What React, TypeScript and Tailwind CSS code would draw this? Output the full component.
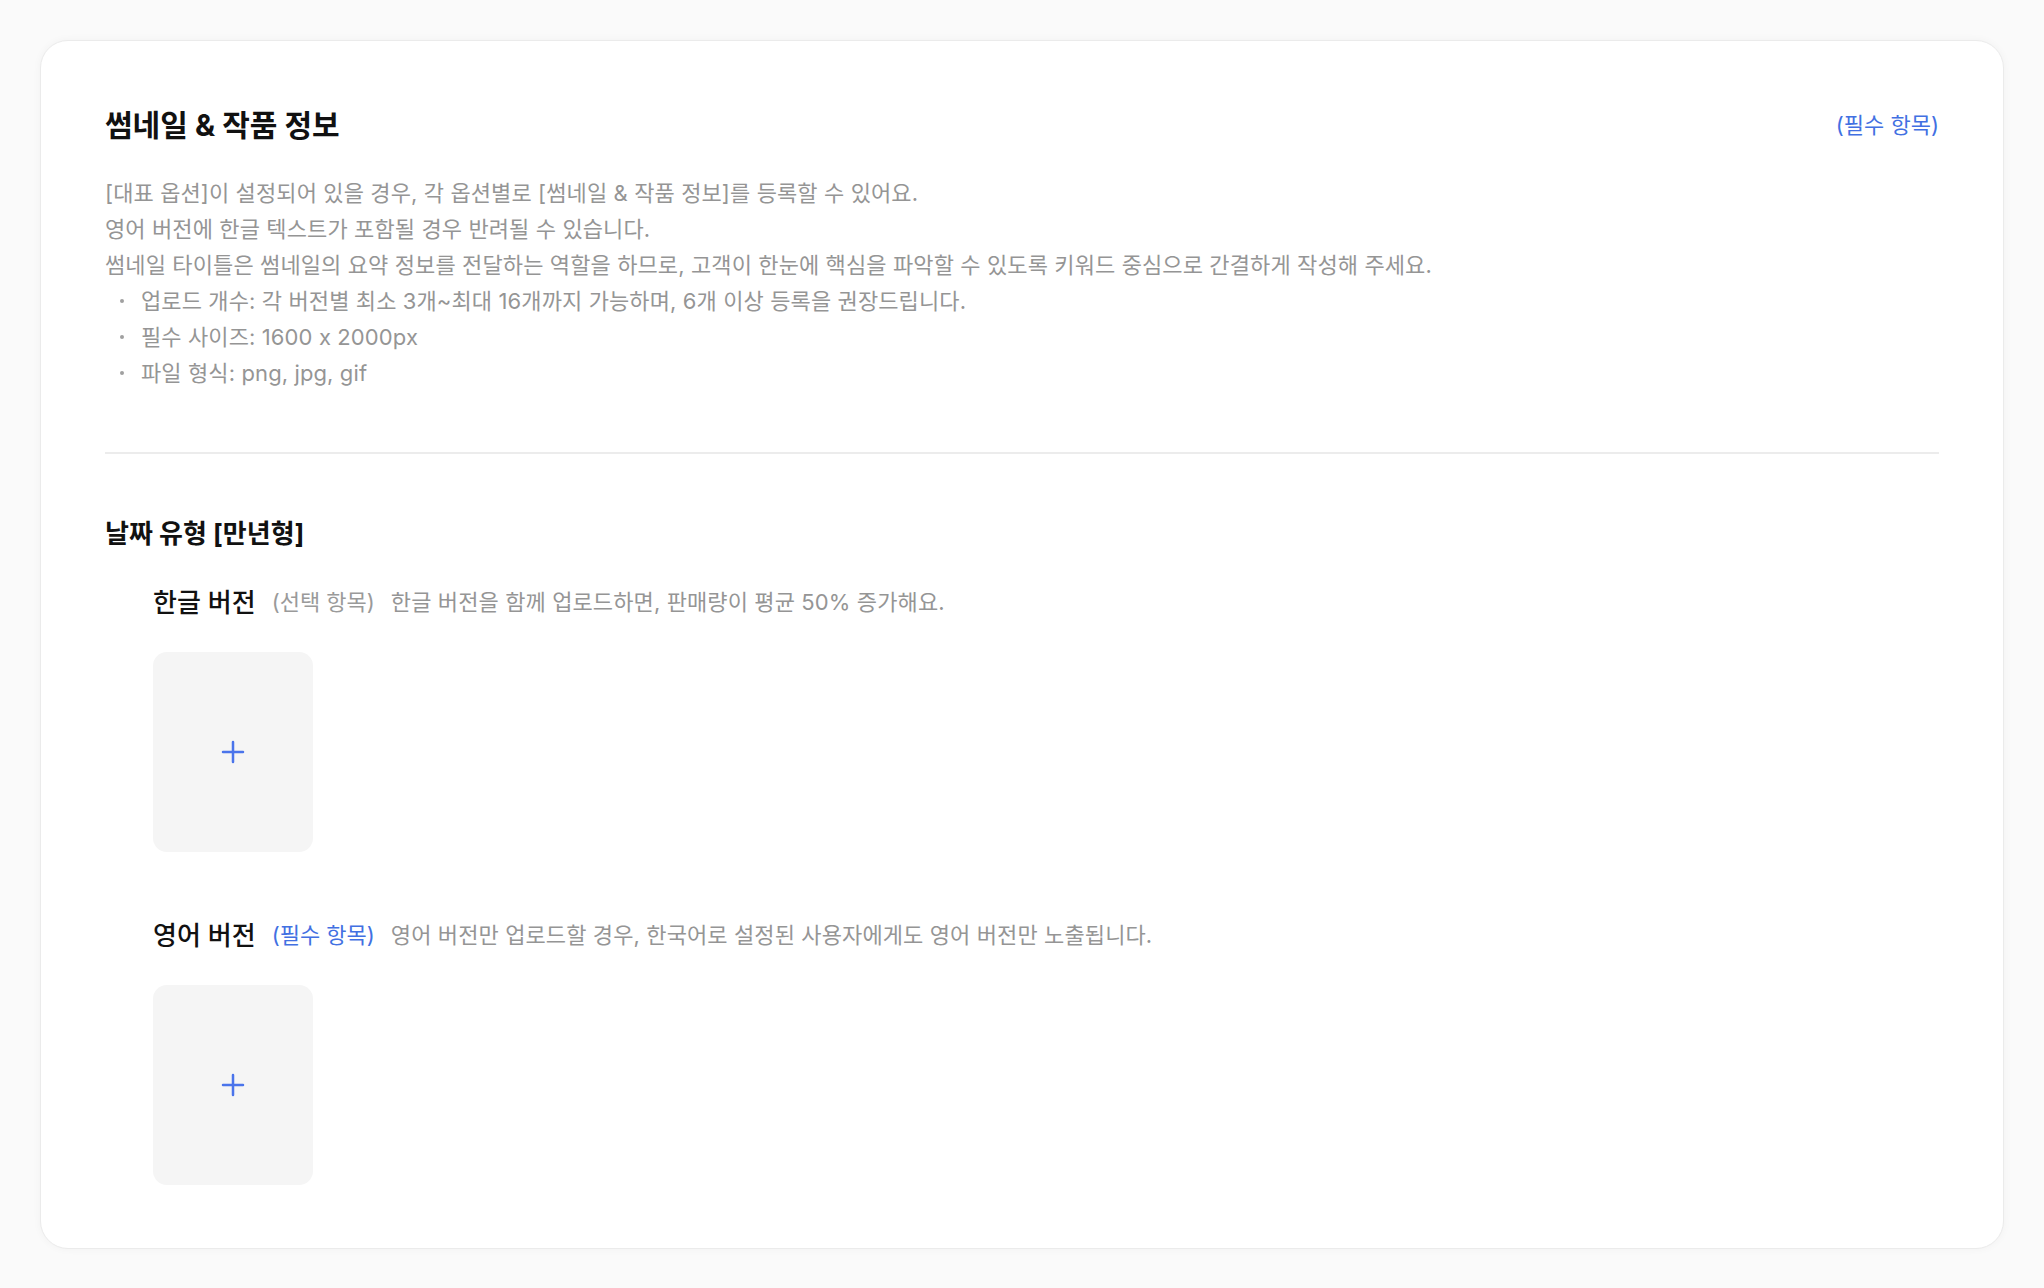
import React from 'react';

const FONT = { fontFamily: 'Inter, "Noto Sans CJK KR", sans-serif' };

const GUIDE_LINES = [
  '[대표 옵션]이 설정되어 있을 경우, 각 옵션별로 [썸네일 & 작품 정보]를 등록할 수 있어요.',
  '영어 버전에 한글 텍스트가 포함될 경우 반려될 수 있습니다.',
  '썸네일 타이틀은 썸네일의 요약 정보를 전달하는 역할을 하므로, 고객이 한눈에 핵심을 파악할 수 있도록 키워드 중심으로 간결하게 작성해 주세요.',
];

const GUIDE_BULLETS = [
  '업로드 개수: 각 버전별 최소 3개~최대 16개까지 가능하며, 6개 이상 등록을 권장드립니다.',
  '필수 사이즈: 1600 x 2000px',
  '파일 형식: png, jpg, gif',
];

interface VersionProps {
  label: string;
  tag: string;
  required?: boolean;
  note: string;
  first?: boolean;
}

const UploadBox: React.FC = () => (
  <button className="w-[160px] h-[200px] rounded-[14px] bg-[#f5f5f5] flex items-center justify-center">
    <svg width="24" height="24" viewBox="0 0 24 24" fill="none" stroke="#4a74eb" strokeWidth="2.5" strokeLinecap="round">
      <path d="M12 2v20M2 12h20" />
    </svg>
  </button>
);

const VersionUpload: React.FC<VersionProps> = ({ label, tag, required, note, first }) => (
  <div className={first ? 'mt-9 pl-12' : 'mt-[67px] pl-12'}>
    <div className="flex items-center h-8">
      <span className="text-[26px] font-medium text-[#111]">{label}</span>
      <span className={`ml-4 text-[22px] ${required ? 'text-[#4270e2]' : 'text-[#9a9a9a]'}`}>{tag}</span>
      <span className="ml-4 text-[22px] tracking-[0.005em] text-[#959595]">{note}</span>
    </div>
    <div className="mt-[34px]">
      <UploadBox />
    </div>
  </div>
);

export default function App() {
  return (
    <div className="min-h-screen bg-[#fafafa] p-10" style={FONT}>
      <section className="bg-white border border-[#ebebeb] rounded-[28px] shadow-[0_0_8px_rgba(0,0,0,0.04)] px-16 pt-[66px] pb-[63px]">
        <div className="flex items-center justify-between h-9">
          <h2 className="text-[30px] font-bold text-[#111]">썸네일 &amp; 작품 정보</h2>
          <span className="text-[22px] text-[#4270e2]">(필수 항목)</span>
        </div>

        <div className="mt-8 text-[22px] leading-[36px] tracking-[0.005em] text-[#959595]">
          {GUIDE_LINES.map(line => (
            <p key={line}>{line}</p>
          ))}
          <ul>
            {GUIDE_BULLETS.map(item => (
              <li key={item} className="flex items-center pl-3">
                <span className="w-6 flex items-center">
                  <span className="ml-[3px] w-1 h-1 rounded-full bg-[#a0a0a0]"></span>
                </span>
                {item}
              </li>
            ))}
          </ul>
        </div>

        <div className="mt-[61px] h-[2px] bg-[#ececec]"></div>

        <h3 className="mt-16 text-[26px] leading-8 font-bold text-[#111]">날짜 유형 [만년형]</h3>

        <VersionUpload
          first
          label="한글 버전"
          tag="(선택 항목)"
          note="한글 버전을 함께 업로드하면, 판매량이 평균 50% 증가해요."
        />
        <VersionUpload
          required
          label="영어 버전"
          tag="(필수 항목)"
          note="영어 버전만 업로드할 경우, 한국어로 설정된 사용자에게도 영어 버전만 노출됩니다."
        />
      </section>
    </div>
  );
}
